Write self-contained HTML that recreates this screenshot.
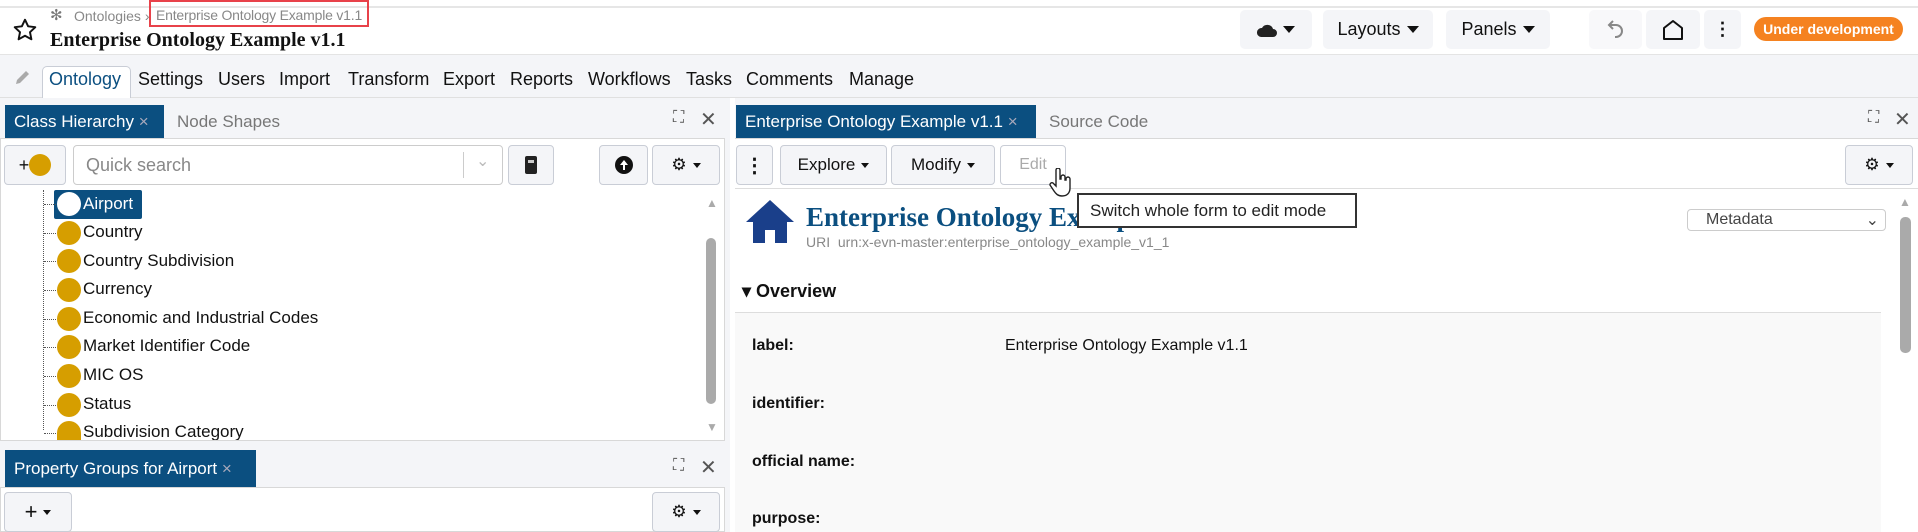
<!DOCTYPE html>
<html><head><meta charset="utf-8"><style>
*{box-sizing:border-box;margin:0;padding:0}
body{width:1918px;height:532px;overflow:hidden;background:#fff;font-family:"Liberation Sans",sans-serif;color:#111;position:relative}
.a{position:absolute}
.btn{position:absolute;border:1px solid #c9cdd6;border-radius:4px;background:#f4f5f8;display:flex;align-items:center;justify-content:center;font-size:17px}
.hb{position:absolute;background:#f4f5f8;border-radius:5px;display:flex;align-items:center;justify-content:center;font-size:18px}
.tri{display:inline-block;width:0;height:0;border-left:6px solid transparent;border-right:6px solid transparent;border-top:7px solid #111;margin-left:6px}
.tri.s{border-left-width:4px;border-right-width:4px;border-top-width:5px}
.menu span{position:absolute;top:69px;font-size:18px}
.dot{position:absolute;left:57px;width:24px;height:24px;border-radius:50%;background:#d69e00}
.row{position:absolute;left:83px;font-size:17px}
.hl{position:absolute;left:44px;width:12px;border-top:1px dotted #555}
.fl{position:absolute;left:752px;font-size:16px;font-weight:bold}
</style></head><body>
<div class="a" style="left:0;top:6px;width:1918px;height:2px;background:#e6e6e6"></div>
<svg class="a" style="left:12px;top:17px" width="26" height="26" viewBox="0 0 24 24"><path d="M12 2.5l2.9 6.1 6.6.8-4.9 4.6 1.3 6.6L12 17.3l-5.9 3.3 1.3-6.6-4.9-4.6 6.6-.8z" fill="none" stroke="#111" stroke-width="1.8" stroke-linejoin="round"/></svg>
<div class="a" style="left:50px;top:6px;font-size:15px;color:#777">✻</div>
<div class="a" style="left:74px;top:8px;font-size:14px;color:#888">Ontologies ›</div>
<div class="a" style="left:149px;top:0px;width:220px;height:27px;border:2px solid #e8424a"></div>
<div class="a" style="left:156px;top:7px;font-size:14px;color:#888;letter-spacing:-0.2px">Enterprise Ontology Example v1.1</div>
<div class="a" style="left:50px;top:29px;font-family:'Liberation Serif',serif;font-weight:bold;font-size:20px">Enterprise Ontology Example v1.1</div>
<div class="hb" style="left:1240px;top:10px;width:72px;height:39px"><svg width="20" height="16" viewBox="0 0 20 16"><path d="M4 15h12a4 4 0 0 0 0-8 6 6 0 0 0-11-1 4.5 4.5 0 0 0-1 9z" fill="#222"/></svg><span class="tri"></span></div>
<div class="hb" style="left:1323px;top:10px;width:110px;height:39px">Layouts<span class="tri"></span></div>
<div class="hb" style="left:1446px;top:10px;width:104px;height:39px">Panels<span class="tri"></span></div>
<div class="hb" style="left:1589px;top:10px;width:53px;height:39px;background:#f8f8fa"><svg width="18" height="22" viewBox="0 0 18 22"><path d="M6 2L2 6l4 4M2 6h7a6 6 0 0 1 0 12h-1" fill="none" stroke="#888" stroke-width="2"/></svg></div>
<div class="hb" style="left:1646px;top:10px;width:54px;height:39px"><svg width="24" height="24" viewBox="0 0 24 24"><path d="M3 21V10l9-7 9 7v11z" fill="none" stroke="#111" stroke-width="2" stroke-linejoin="round"/></svg></div>
<div class="hb" style="left:1704px;top:10px;width:37px;height:39px;font-weight:bold">⋮</div>
<div class="a" style="left:1754px;top:17px;width:149px;height:24px;background:#f58220;border-radius:12px;color:#fff;font-weight:bold;font-size:14px;text-align:center;line-height:24px">Under development</div>
<div class="a" style="left:0;top:54px;width:1918px;height:44px;background:#f4f5f8;border-top:1px solid #e4e4e4;border-bottom:1px solid #e0e0e0"></div>
<svg class="a" style="left:14px;top:68px" width="18" height="18" viewBox="0 0 18 18"><path d="M2 16l1-4 9-9 3 3-9 9z" fill="#aaa"/></svg>
<div class="a" style="left:42px;top:66px;width:89px;height:33px;background:#fff;border:1px solid #c9cdd6;border-bottom:none;border-radius:5px 5px 0 0"></div>
<div class="menu"><span style="left:49px;color:#0b4f80">Ontology</span><span style="left:138px">Settings</span><span style="left:218px">Users</span><span style="left:279px">Import</span><span style="left:348px">Transform</span><span style="left:443px">Export</span><span style="left:510px">Reports</span><span style="left:588px">Workflows</span><span style="left:686px">Tasks</span><span style="left:746px">Comments</span><span style="left:849px">Manage</span></div>
<div class="a" style="left:0;top:98px;width:730px;height:434px;background:#f4f5f8"></div>
<div class="a" style="left:5px;top:105px;width:159px;height:34px;background:#0b4f80;color:#fff;font-size:17px;padding:7px 9px">Class Hierarchy <span style="color:#aab">×</span></div>
<div class="a" style="left:177px;top:112px;font-size:17px;color:#777">Node Shapes</div>
<div class="a" style="left:673px;top:109px;font-size:16px;color:#555">⛶</div><div class="a" style="left:700px;top:107px;font-size:20px;color:#555">✕</div>
<div class="a" style="left:0;top:138px;width:725px;height:303px;background:#fff;border:1px solid #d8d8d8"></div>
<div class="btn" style="left:4px;top:145px;width:62px;height:40px;font-size:18px">+<span style="display:inline-block;width:22px;height:22px;border-radius:50%;background:#d69e00"></span></div>
<div class="a" style="left:73px;top:145px;width:430px;height:40px;border:1px solid #ccc;border-radius:4px;background:#fff;font-size:18px;color:#888;padding:9px 12px">Quick search</div>
<div class="a" style="left:463px;top:152px;width:1px;height:26px;background:#ccc"></div>
<div class="a" style="left:476px;top:151px;font-size:16px;color:#bbb">⌄</div>
<div class="btn" style="left:508px;top:145px;width:46px;height:40px"><svg width="14" height="20"><rect x="1" y="1" width="12" height="18" rx="2" fill="#222"/><rect x="4" y="5" width="6" height="3" fill="#ccc"/></svg></div>
<div class="btn" style="left:599px;top:145px;width:49px;height:40px"><svg width="20" height="20"><circle cx="10" cy="10" r="9" fill="#111"/><path d="M10 5l-4 5h3v5h2v-5h3z" fill="#fff"/></svg></div>
<div class="btn" style="left:652px;top:145px;width:68px;height:40px">⚙<span class="tri s"></span></div>
<div class="a" style="left:43px;top:190px;height:240px;border-left:1px dotted #555"></div>
<div class="a" style="left:54px;top:190px;width:88px;height:29px;background:#0b4f80;border-radius:2px"></div>
<div class="hl" style="top:204px"></div><div class="dot" style="top:192px;background:#fff"></div><div class="row" style="top:194px;color:#fff">Airport</div>
<div class="hl" style="top:233px"></div><div class="dot" style="top:221px"></div><div class="row" style="top:222px">Country</div>
<div class="hl" style="top:261px"></div><div class="dot" style="top:249px"></div><div class="row" style="top:251px">Country Subdivision</div>
<div class="hl" style="top:290px"></div><div class="dot" style="top:278px"></div><div class="row" style="top:279px">Currency</div>
<div class="hl" style="top:319px"></div><div class="dot" style="top:307px"></div><div class="row" style="top:308px">Economic and Industrial Codes</div>
<div class="hl" style="top:347px"></div><div class="dot" style="top:335px"></div><div class="row" style="top:336px">Market Identifier Code</div>
<div class="hl" style="top:376px"></div><div class="dot" style="top:364px"></div><div class="row" style="top:365px">MIC OS</div>
<div class="hl" style="top:405px"></div><div class="dot" style="top:393px"></div><div class="row" style="top:394px">Status</div>
<div class="hl" style="top:433px"></div><div class="a" style="left:57px;top:421px;width:24px;height:19px;border-radius:12px 12px 0 0;background:#d69e00"></div><div class="row" style="top:422px;height:18px;overflow:hidden">Subdivision Category</div>
<div class="a" style="left:706px;top:196px;font-size:12px;color:#aaa">▲</div>
<div class="a" style="left:706px;top:238px;width:10px;height:166px;background:#aaa;border-radius:5px"></div>
<div class="a" style="left:706px;top:420px;font-size:12px;color:#aaa">▼</div>
<div class="a" style="left:5px;top:450px;width:251px;height:37px;background:#0b4f80;color:#fff;font-size:17px;padding:9px 9px">Property Groups for Airport <span style="color:#aab">×</span></div>
<div class="a" style="left:673px;top:457px;font-size:16px;color:#555">⛶</div><div class="a" style="left:700px;top:455px;font-size:20px;color:#555">✕</div>
<div class="a" style="left:0;top:487px;width:725px;height:45px;background:#fff;border:1px solid #d8d8d8"></div>
<div class="btn" style="left:4px;top:492px;width:68px;height:40px;font-size:22px">+<span class="tri s"></span></div>
<div class="btn" style="left:652px;top:492px;width:68px;height:40px">⚙<span class="tri s"></span></div>
<div class="a" style="left:735px;top:98px;width:1183px;height:434px;background:#f4f5f8"></div>
<div class="a" style="left:736px;top:105px;width:300px;height:34px;background:#0b4f80;color:#fff;font-size:17px;padding:7px 9px">Enterprise Ontology Example v1.1 <span style="color:#aab">×</span></div>
<div class="a" style="left:1049px;top:112px;font-size:17px;color:#777">Source Code</div>
<div class="a" style="left:1868px;top:109px;font-size:16px;color:#555">⛶</div><div class="a" style="left:1894px;top:107px;font-size:20px;color:#555">✕</div>
<div class="a" style="left:735px;top:138px;width:1183px;height:394px;background:#fff;border-top:1px solid #d8d8d8"></div>
<div class="btn" style="left:736px;top:145px;width:37px;height:40px;font-weight:bold;font-size:20px">⋮</div>
<div class="btn" style="left:780px;top:145px;width:107px;height:40px">Explore<span class="tri s"></span></div>
<div class="btn" style="left:891px;top:145px;width:104px;height:40px">Modify<span class="tri s"></span></div>
<div class="btn" style="left:1000px;top:145px;width:66px;height:40px;background:#fff;color:#aaa;font-size:16px">Edit</div>
<div class="btn" style="left:1845px;top:145px;width:68px;height:40px">⚙<span class="tri s"></span></div>
<div class="a" style="left:735px;top:188px;width:1183px;height:1px;background:#ddd"></div>
<svg class="a" style="left:744px;top:198px" width="52" height="46" viewBox="0 0 52 46"><path d="M26 2L2 24h7v21h12V32h10v13h12V24h7z" fill="#1a3f8a"/></svg>
<div class="a" style="left:806px;top:202px;font-family:'Liberation Serif',serif;font-weight:bold;font-size:27px;color:#0b4f80">Enterprise Ontology Example v1.1</div>
<div class="a" style="left:806px;top:234px;font-size:14px;color:#888">URI &nbsp;urn:x-evn-master:enterprise_ontology_example_v1_1</div>
<div class="a" style="left:1687px;top:209px;width:199px;height:22px;border:1px solid #ccc;border-radius:4px;font-size:16px;color:#444;padding:1px 18px">Metadata<span style="position:absolute;right:6px;top:0">⌄</span></div>
<div class="a" style="left:742px;top:281px;font-size:18px;font-weight:bold">▾ Overview</div>
<div class="a" style="left:735px;top:312px;width:1146px;height:220px;background:#f9f9f9;border-top:1px solid #ddd"></div>
<div class="fl" style="top:337px">label:</div>
<div class="a" style="left:1005px;top:337px;font-size:16px">Enterprise Ontology Example v1.1</div>
<div class="fl" style="top:395px">identifier:</div>
<div class="fl" style="top:453px">official name:</div>
<div class="fl" style="top:510px">purpose:</div>
<div class="a" style="left:1899px;top:195px;font-size:12px;color:#aaa">▲</div>
<div class="a" style="left:1900px;top:217px;width:11px;height:136px;background:#aaa;border-radius:5px"></div>
<div class="a" style="left:1077px;top:193px;width:280px;height:35px;background:#fff;border:2px solid #333;font-size:17px;padding:6px 11px;color:#222">Switch whole form to edit mode</div>
<svg class="a" style="left:1049px;top:168px" width="24" height="30" viewBox="0 0 24 30"><path d="M7 2a2 2 0 0 1 4 0v9h1V9a2 2 0 0 1 4 0v3h1v-1a2 2 0 0 1 4 0v9c0 5-3 8-8 8-4 0-6-2-8-5l-4-6a2 2 0 0 1 3-2l3 3z" fill="#fff" stroke="#222" stroke-width="1.4"/></svg>
</body></html>
